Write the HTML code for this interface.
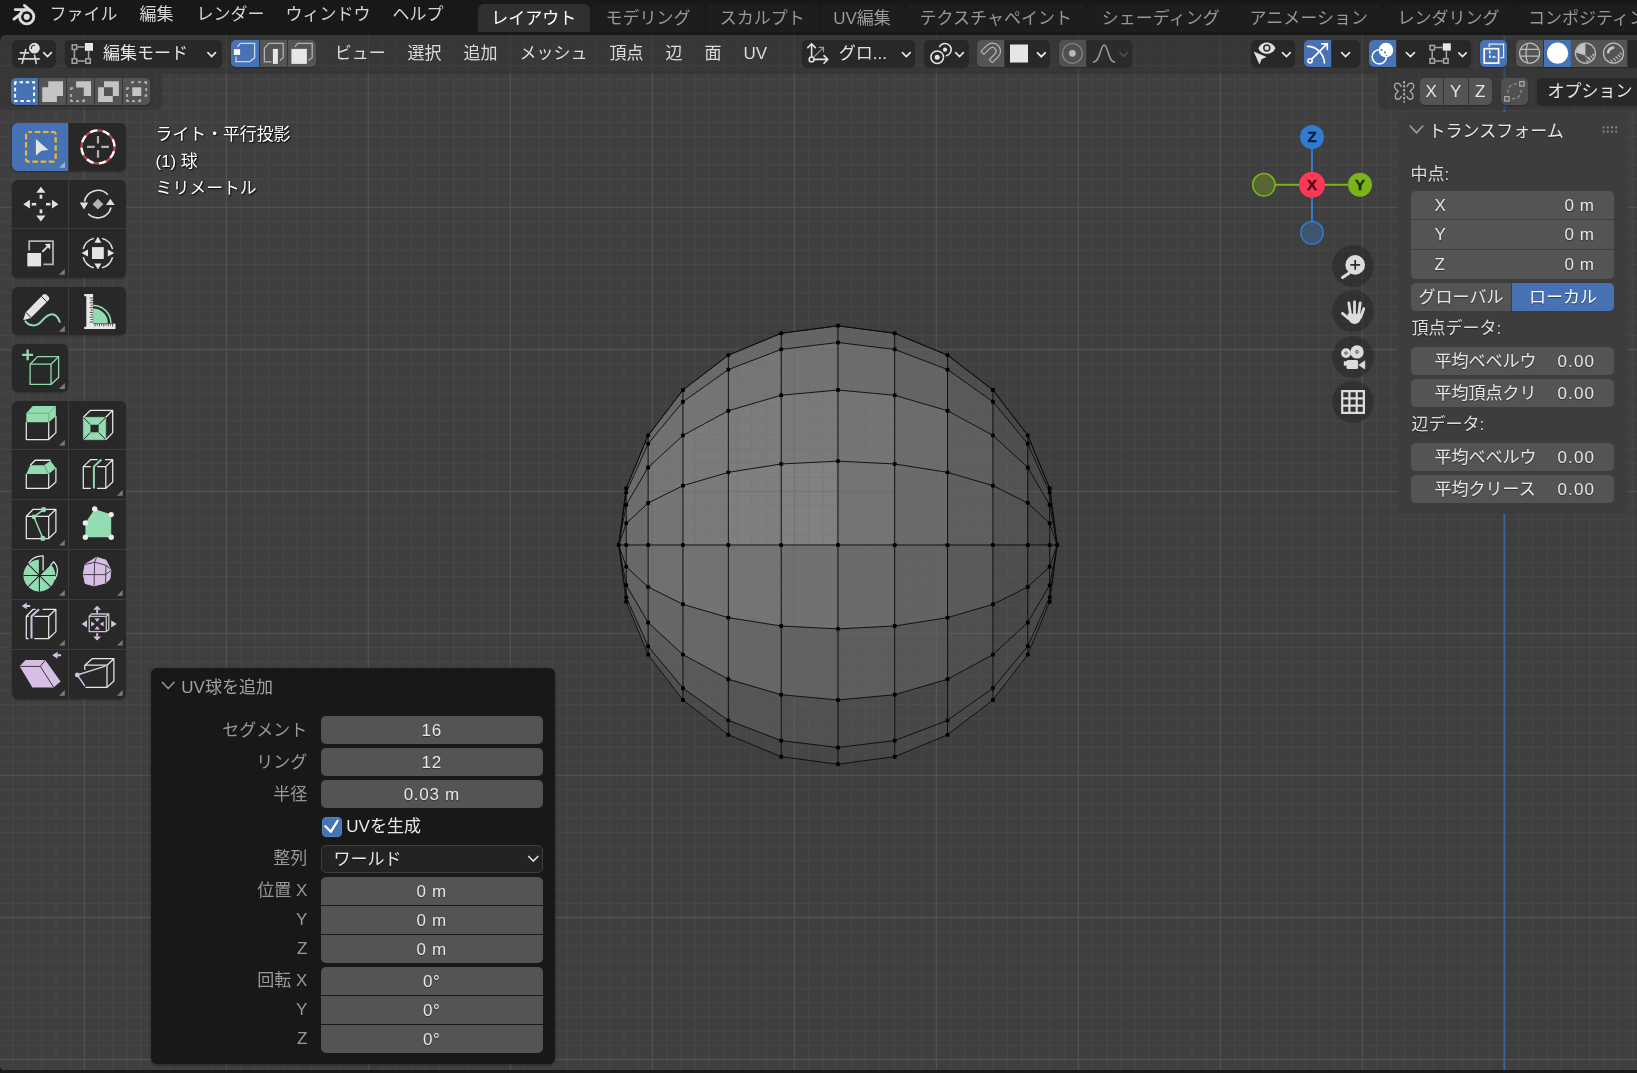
<!DOCTYPE html>
<html lang="ja"><head><meta charset="utf-8"><title>Blender</title>
<style>
*{box-sizing:border-box;margin:0;padding:0}
html,body{width:1637px;height:1073px;overflow:hidden;background:#181818}
body{font-family:"Liberation Sans","Noto Sans CJK JP",sans-serif;font-size:17px;color:#e0e0e0;position:relative;-webkit-font-smoothing:antialiased}
#vp{position:absolute;left:0;top:0;width:1637px;height:1073px;overflow:hidden}
#scene{position:absolute;left:0;top:0;background:#3f3f3f}
.abs{position:absolute}
.t{position:absolute;white-space:nowrap;line-height:24px;height:24px}
#topbar{position:absolute;left:0;top:0;width:1637px;height:34.5px;background:#181818}
#botbar{position:absolute;left:0;top:1069.5px;width:1637px;height:4px;background:#181818}
.menu{color:#d4d4d4}
.tab{position:absolute;top:3.8px;height:28.7px;border-radius:6px 6px 0 0;background:#1d1d1d;color:#989898;text-align:center;line-height:29px;white-space:nowrap;overflow:hidden}
.tab.act{background:#303030;color:#fff}
#hdr{position:absolute;left:0;top:34.5px;width:1637px;height:39px;background:rgba(48,48,48,.5)}
.cornerTL{position:absolute;left:0;top:34.5px;width:6px;height:6px;background:radial-gradient(circle at 6px 6px,rgba(0,0,0,0) 5.5px,#181818 6.2px)}
.cornerBL{position:absolute;left:0;top:1065.5px;width:4px;height:4px;background:radial-gradient(circle at 4px 0,rgba(0,0,0,0) 3.6px,#181818 4.3px)}
#tlh{position:absolute;left:0;top:73.5px;width:162px;height:36px;background:rgba(48,48,48,.5);border-radius:0 0 7px 0}
#trh{position:absolute;left:1378px;top:73.5px;width:259px;height:36px;background:rgba(48,48,48,.5);border-radius:0 0 0 7px}
.btn{position:absolute;top:40px;height:27px;background:#282828;border-radius:5px;box-shadow:0 1px 1px rgba(0,0,0,.25)}
.btn.g{background:#545454}
.btn.b{background:#4772b3}
.btn.l{border-radius:5px 0 0 5px}
.btn.r{border-radius:0 5px 5px 0}
.btn.m{border-radius:0}
.btn svg,.tool svg,.nav svg{position:absolute;left:0;top:0;overflow:visible}
.r2{top:78px}
.hm{position:absolute;top:42px;line-height:24px;color:#dcdcdc;white-space:nowrap}
.tool{position:absolute;background:#282828;width:56px;height:48px}
.tool.sel{background:#4772b3}
.tg{position:absolute;left:12px;width:114px;border-radius:6px;overflow:hidden;background:#3c3c3c;box-shadow:0 1px 2px rgba(0,0,0,.3)}
.ov{position:absolute;left:155.6px;font-size:16.85px;color:#fff;text-shadow:1px 1px 1.5px rgba(0,0,0,.9),0 0 2px rgba(0,0,0,.5);line-height:24px;white-space:nowrap}
.nav{position:absolute;width:42px;height:42px;border-radius:50%;background:rgba(30,30,30,.42);left:1332px}
#npanel{position:absolute;left:1398px;top:110px;width:229px;height:404.5px}
#npbg{position:absolute;left:0;top:2px;width:229px;height:402.3px;background:#3d3d3d;border-radius:6px}
.nf{position:absolute;left:13px;width:203px;background:#545454;color:#e6e6e6;text-shadow:0 1px 1px rgba(0,0,0,.45)}
.nf .l{position:absolute;left:23.5px;top:0;white-space:nowrap}
.nf .v{position:absolute;right:19.4px;top:0;white-space:nowrap;letter-spacing:.6px}
.nf .v.d{right:18.9px;letter-spacing:1.15px}
.nl{position:absolute;left:13.5px;color:#dcdcdc;line-height:24px;white-space:nowrap;text-shadow:0 1px 1px rgba(0,0,0,.45)}
#redo{position:absolute;left:150.5px;top:668px;width:404.5px;height:395.5px;background:#181818;border-radius:6px;box-shadow:0 1px 3px rgba(0,0,0,.4)}
.rf{position:absolute;left:170.5px;width:221.5px;height:28px;background:#545454;color:#e6e6e6;text-align:center;line-height:29px;letter-spacing:.7px;text-shadow:0 1px 1px rgba(0,0,0,.4)}
.rl{position:absolute;right:247.7px;color:#989898;line-height:30px;height:28px;white-space:nowrap;text-align:right}
#ui{position:absolute;left:0;top:0;width:1637px;height:1073px;will-change:transform}
</style></head>
<body>
<div id="vp">
<svg id="scene" width="1637" height="1073" viewBox="0 0 1637 1073">
<g shape-rendering="geometricPrecision"><path d="M618.75 545.00L626.22 488.27L626.22 492.59Z" fill="#5e5f5f" stroke="#5e5f5f" stroke-width="0.6"/><path d="M618.75 545.00L626.22 492.59L626.22 504.88Z" fill="#606161" stroke="#606161" stroke-width="0.6"/><path d="M618.75 545.00L626.22 504.88L626.22 523.29Z" fill="#616262" stroke="#616262" stroke-width="0.6"/><path d="M618.75 545.00L626.22 523.29L626.22 545.00Z" fill="#616161" stroke="#616161" stroke-width="0.6"/><path d="M618.75 545.00L626.22 545.00L626.22 566.71Z" fill="#5f6060" stroke="#5f6060" stroke-width="0.6"/><path d="M618.75 545.00L626.22 566.71L626.22 585.12Z" fill="#5e5e5e" stroke="#5e5e5e" stroke-width="0.6"/><path d="M618.75 545.00L626.22 585.12L626.22 597.41Z" fill="#5b5c5c" stroke="#5b5c5c" stroke-width="0.6"/><path d="M618.75 545.00L626.22 597.41L626.22 601.73Z" fill="#585959" stroke="#585959" stroke-width="0.6"/><path d="M626.22 488.27L648.12 435.40L648.12 443.74L626.22 492.59Z" fill="#646566" stroke="#646566" stroke-width="0.6"/><path d="M626.22 492.59L648.12 443.74L648.12 467.50L626.22 504.88Z" fill="#6a6b6b" stroke="#6a6b6b" stroke-width="0.6"/><path d="M626.22 504.88L648.12 467.50L648.12 503.06L626.22 523.29Z" fill="#6c6d6e" stroke="#6c6d6e" stroke-width="0.6"/><path d="M626.22 523.29L648.12 503.06L648.12 545.00L626.22 545.00Z" fill="#6c6d6d" stroke="#6c6d6d" stroke-width="0.6"/><path d="M626.22 545.00L648.12 545.00L648.12 586.94L626.22 566.71Z" fill="#686a6a" stroke="#686a6a" stroke-width="0.6"/><path d="M626.22 566.71L648.12 586.94L648.12 622.50L626.22 585.12Z" fill="#636464" stroke="#636464" stroke-width="0.6"/><path d="M626.22 585.12L648.12 622.50L648.12 646.26L626.22 597.41Z" fill="#5c5d5d" stroke="#5c5d5d" stroke-width="0.6"/><path d="M626.22 597.41L648.12 646.26L648.12 654.60L626.22 601.73Z" fill="#545555" stroke="#545555" stroke-width="0.6"/><path d="M648.12 435.40L682.95 390.00L682.95 401.80L648.12 443.74Z" fill="#68696a" stroke="#68696a" stroke-width="0.6"/><path d="M648.12 443.74L682.95 401.80L682.95 435.40L648.12 467.50Z" fill="#707272" stroke="#707272" stroke-width="0.6"/><path d="M648.12 467.50L682.95 435.40L682.95 485.68L648.12 503.06Z" fill="#757677" stroke="#757677" stroke-width="0.6"/><path d="M648.12 503.06L682.95 485.68L682.95 545.00L648.12 545.00Z" fill="#747676" stroke="#747676" stroke-width="0.6"/><path d="M648.12 545.00L682.95 545.00L682.95 604.32L648.12 586.94Z" fill="#6f7070" stroke="#6f7070" stroke-width="0.6"/><path d="M648.12 586.94L682.95 604.32L682.95 654.60L648.12 622.50Z" fill="#666767" stroke="#666767" stroke-width="0.6"/><path d="M648.12 622.50L682.95 654.60L682.95 688.20L648.12 646.26Z" fill="#5b5b5b" stroke="#5b5b5b" stroke-width="0.6"/><path d="M648.12 646.26L682.95 688.20L682.95 700.00L648.12 654.60Z" fill="#4f4f4f" stroke="#4f4f4f" stroke-width="0.6"/><path d="M682.95 390.00L728.35 355.17L728.35 369.62L682.95 401.80Z" fill="#696a6b" stroke="#696a6b" stroke-width="0.6"/><path d="M682.95 401.80L728.35 369.62L728.35 410.77L682.95 435.40Z" fill="#747676" stroke="#747676" stroke-width="0.6"/><path d="M682.95 435.40L728.35 410.77L728.35 472.35L682.95 485.68Z" fill="#7a7b7c" stroke="#7a7b7c" stroke-width="0.6"/><path d="M682.95 485.68L728.35 472.35L728.35 545.00L682.95 545.00Z" fill="#797b7b" stroke="#797b7b" stroke-width="0.6"/><path d="M682.95 545.00L728.35 545.00L728.35 617.65L682.95 604.32Z" fill="#727474" stroke="#727474" stroke-width="0.6"/><path d="M682.95 604.32L728.35 617.65L728.35 679.23L682.95 654.60Z" fill="#676868" stroke="#676868" stroke-width="0.6"/><path d="M682.95 654.60L728.35 679.23L728.35 720.38L682.95 688.20Z" fill="#585959" stroke="#585959" stroke-width="0.6"/><path d="M682.95 688.20L728.35 720.38L728.35 734.83L682.95 700.00Z" fill="#4a4a4a" stroke="#4a4a4a" stroke-width="0.6"/><path d="M728.35 355.17L781.22 333.27L781.22 349.39L728.35 369.62Z" fill="#68696a" stroke="#68696a" stroke-width="0.6"/><path d="M728.35 369.62L781.22 349.39L781.22 395.28L728.35 410.77Z" fill="#757677" stroke="#757677" stroke-width="0.6"/><path d="M728.35 410.77L781.22 395.28L781.22 463.97L728.35 472.35Z" fill="#7b7d7d" stroke="#7b7d7d" stroke-width="0.6"/><path d="M728.35 472.35L781.22 463.97L781.22 545.00L728.35 545.00Z" fill="#7e8080" stroke="#7e8080" stroke-width="0.6"/><path d="M728.35 545.00L781.22 545.00L781.22 626.03L728.35 617.65Z" fill="#737475" stroke="#737475" stroke-width="0.6"/><path d="M728.35 617.65L781.22 626.03L781.22 694.72L728.35 679.23Z" fill="#656666" stroke="#656666" stroke-width="0.6"/><path d="M728.35 679.23L781.22 694.72L781.22 740.61L728.35 720.38Z" fill="#555555" stroke="#555555" stroke-width="0.6"/><path d="M728.35 720.38L781.22 740.61L781.22 756.73L728.35 734.83Z" fill="#464645" stroke="#464645" stroke-width="0.6"/><path d="M781.22 333.27L837.95 325.80L837.95 342.49L781.22 349.39Z" fill="#646566" stroke="#646566" stroke-width="0.6"/><path d="M781.22 349.39L837.95 342.49L837.95 390.00L781.22 395.28Z" fill="#727374" stroke="#727374" stroke-width="0.6"/><path d="M781.22 395.28L837.95 390.00L837.95 461.12L781.22 463.97Z" fill="#797b7b" stroke="#797b7b" stroke-width="0.6"/><path d="M781.22 463.97L837.95 461.12L837.95 545.00L781.22 545.00Z" fill="#808182" stroke="#808182" stroke-width="0.6"/><path d="M781.22 545.00L837.95 545.00L837.95 628.88L781.22 626.03Z" fill="#707272" stroke="#707272" stroke-width="0.6"/><path d="M781.22 626.03L837.95 628.88L837.95 700.00L781.22 694.72Z" fill="#616262" stroke="#616262" stroke-width="0.6"/><path d="M781.22 694.72L837.95 700.00L837.95 747.51L781.22 740.61Z" fill="#515151" stroke="#515151" stroke-width="0.6"/><path d="M781.22 740.61L837.95 747.51L837.95 764.20L781.22 756.73Z" fill="#474646" stroke="#474646" stroke-width="0.6"/><path d="M837.95 325.80L894.68 333.27L894.68 349.39L837.95 342.49Z" fill="#5e5f60" stroke="#5e5f60" stroke-width="0.6"/><path d="M837.95 342.49L894.68 349.39L894.68 395.28L837.95 390.00Z" fill="#6c6d6e" stroke="#6c6d6e" stroke-width="0.6"/><path d="M837.95 390.00L894.68 395.28L894.68 463.97L837.95 461.12Z" fill="#737576" stroke="#737576" stroke-width="0.6"/><path d="M837.95 461.12L894.68 463.97L894.68 545.00L837.95 545.00Z" fill="#737475" stroke="#737475" stroke-width="0.6"/><path d="M837.95 545.00L894.68 545.00L894.68 626.03L837.95 628.88Z" fill="#6a6c6c" stroke="#6a6c6c" stroke-width="0.6"/><path d="M837.95 628.88L894.68 626.03L894.68 694.72L837.95 700.00Z" fill="#5d5d5d" stroke="#5d5d5d" stroke-width="0.6"/><path d="M837.95 700.00L894.68 694.72L894.68 740.61L837.95 747.51Z" fill="#4c4c4c" stroke="#4c4c4c" stroke-width="0.6"/><path d="M837.95 747.51L894.68 740.61L894.68 756.73L837.95 764.20Z" fill="#474747" stroke="#474747" stroke-width="0.6"/><path d="M894.68 333.27L947.55 355.17L947.55 369.62L894.68 349.39Z" fill="#575758" stroke="#575758" stroke-width="0.6"/><path d="M894.68 349.39L947.55 369.62L947.55 410.77L894.68 395.28Z" fill="#646466" stroke="#646466" stroke-width="0.6"/><path d="M894.68 395.28L947.55 410.77L947.55 472.35L894.68 463.97Z" fill="#6b6c6d" stroke="#6b6c6d" stroke-width="0.6"/><path d="M894.68 463.97L947.55 472.35L947.55 545.00L894.68 545.00Z" fill="#6a6b6c" stroke="#6a6b6c" stroke-width="0.6"/><path d="M894.68 545.00L947.55 545.00L947.55 617.65L894.68 626.03Z" fill="#626364" stroke="#626364" stroke-width="0.6"/><path d="M894.68 626.03L947.55 617.65L947.55 679.23L894.68 694.72Z" fill="#565757" stroke="#565757" stroke-width="0.6"/><path d="M894.68 694.72L947.55 679.23L947.55 720.38L894.68 740.61Z" fill="#474747" stroke="#474747" stroke-width="0.6"/><path d="M894.68 740.61L947.55 720.38L947.55 734.83L894.68 756.73Z" fill="#484847" stroke="#484847" stroke-width="0.6"/><path d="M947.55 355.17L992.95 390.00L992.95 401.80L947.55 369.62Z" fill="#4e4e4f" stroke="#4e4e4f" stroke-width="0.6"/><path d="M947.55 369.62L992.95 401.80L992.95 435.40L947.55 410.77Z" fill="#59595a" stroke="#59595a" stroke-width="0.6"/><path d="M947.55 410.77L992.95 435.40L992.95 485.68L947.55 472.35Z" fill="#5f5f61" stroke="#5f5f61" stroke-width="0.6"/><path d="M947.55 472.35L992.95 485.68L992.95 545.00L947.55 545.00Z" fill="#5f5f60" stroke="#5f5f60" stroke-width="0.6"/><path d="M947.55 545.00L992.95 545.00L992.95 604.32L947.55 617.65Z" fill="#595a5a" stroke="#595a5a" stroke-width="0.6"/><path d="M947.55 617.65L992.95 604.32L992.95 654.60L947.55 679.23Z" fill="#4f4f4f" stroke="#4f4f4f" stroke-width="0.6"/><path d="M947.55 679.23L992.95 654.60L992.95 688.20L947.55 720.38Z" fill="#484847" stroke="#484847" stroke-width="0.6"/><path d="M947.55 720.38L992.95 688.20L992.95 700.00L947.55 734.83Z" fill="#494848" stroke="#494848" stroke-width="0.6"/><path d="M992.95 390.00L1027.78 435.40L1027.78 443.74L992.95 401.80Z" fill="#474748" stroke="#474748" stroke-width="0.6"/><path d="M992.95 401.80L1027.78 443.74L1027.78 467.50L992.95 435.40Z" fill="#4e4e4f" stroke="#4e4e4f" stroke-width="0.6"/><path d="M992.95 435.40L1027.78 467.50L1027.78 503.06L992.95 485.68Z" fill="#535353" stroke="#535353" stroke-width="0.6"/><path d="M992.95 485.68L1027.78 503.06L1027.78 545.00L992.95 545.00Z" fill="#535353" stroke="#535353" stroke-width="0.6"/><path d="M992.95 545.00L1027.78 545.00L1027.78 586.94L992.95 604.32Z" fill="#4f4e4f" stroke="#4f4e4f" stroke-width="0.6"/><path d="M992.95 604.32L1027.78 586.94L1027.78 622.50L992.95 654.60Z" fill="#484747" stroke="#484747" stroke-width="0.6"/><path d="M992.95 654.60L1027.78 622.50L1027.78 646.26L992.95 688.20Z" fill="#494848" stroke="#494848" stroke-width="0.6"/><path d="M992.95 688.20L1027.78 646.26L1027.78 654.60L992.95 700.00Z" fill="#494948" stroke="#494948" stroke-width="0.6"/><path d="M1027.78 435.40L1049.68 488.27L1049.68 492.59L1027.78 443.74Z" fill="#484848" stroke="#484848" stroke-width="0.6"/><path d="M1027.78 443.74L1049.68 492.59L1049.68 504.88L1027.78 467.50Z" fill="#484848" stroke="#484848" stroke-width="0.6"/><path d="M1027.78 467.50L1049.68 504.88L1049.68 523.29L1027.78 503.06Z" fill="#484748" stroke="#484748" stroke-width="0.6"/><path d="M1027.78 503.06L1049.68 523.29L1049.68 545.00L1027.78 545.00Z" fill="#484748" stroke="#484748" stroke-width="0.6"/><path d="M1027.78 545.00L1049.68 545.00L1049.68 566.71L1027.78 586.94Z" fill="#484848" stroke="#484848" stroke-width="0.6"/><path d="M1027.78 586.94L1049.68 566.71L1049.68 585.12L1027.78 622.50Z" fill="#494848" stroke="#494848" stroke-width="0.6"/><path d="M1027.78 622.50L1049.68 585.12L1049.68 597.41L1027.78 646.26Z" fill="#494848" stroke="#494848" stroke-width="0.6"/><path d="M1027.78 646.26L1049.68 597.41L1049.68 601.73L1027.78 654.60Z" fill="#4a4949" stroke="#4a4949" stroke-width="0.6"/><path d="M1049.68 488.27L1057.15 545.00L1049.68 492.59Z" fill="#494949" stroke="#494949" stroke-width="0.6"/><path d="M1049.68 492.59L1057.15 545.00L1049.68 504.88Z" fill="#494949" stroke="#494949" stroke-width="0.6"/><path d="M1049.68 504.88L1057.15 545.00L1049.68 523.29Z" fill="#494849" stroke="#494849" stroke-width="0.6"/><path d="M1049.68 523.29L1057.15 545.00L1049.68 545.00Z" fill="#494849" stroke="#494849" stroke-width="0.6"/><path d="M1049.68 545.00L1057.15 545.00L1049.68 566.71Z" fill="#494949" stroke="#494949" stroke-width="0.6"/><path d="M1049.68 566.71L1057.15 545.00L1049.68 585.12Z" fill="#494949" stroke="#494949" stroke-width="0.6"/><path d="M1049.68 585.12L1057.15 545.00L1049.68 597.41Z" fill="#4a4949" stroke="#4a4949" stroke-width="0.6"/><path d="M1049.68 597.41L1057.15 545.00L1049.68 601.73Z" fill="#4a4949" stroke="#4a4949" stroke-width="0.6"/></g>
<path d="M13.40 34V1071M27.60 34V1071M41.80 34V1071M56.00 34V1071M70.20 34V1071M98.60 34V1071M112.80 34V1071M127.00 34V1071M141.20 34V1071M155.40 34V1071M169.60 34V1071M183.80 34V1071M198.00 34V1071M212.20 34V1071M240.60 34V1071M254.80 34V1071M269.00 34V1071M283.20 34V1071M297.40 34V1071M311.60 34V1071M325.80 34V1071M340.00 34V1071M354.20 34V1071M382.60 34V1071M396.80 34V1071M411.00 34V1071M425.20 34V1071M439.40 34V1071M453.60 34V1071M467.80 34V1071M482.00 34V1071M496.20 34V1071M524.60 34V1071M538.80 34V1071M553.00 34V1071M567.20 34V1071M581.40 34V1071M595.60 34V1071M609.80 34V1071M624.00 34V1071M638.20 34V1071M666.60 34V1071M680.80 34V1071M695.00 34V1071M709.20 34V1071M723.40 34V1071M737.60 34V1071M751.80 34V1071M766.00 34V1071M780.20 34V1071M808.60 34V1071M822.80 34V1071M837.00 34V1071M851.20 34V1071M865.40 34V1071M879.60 34V1071M893.80 34V1071M908.00 34V1071M922.20 34V1071M950.60 34V1071M964.80 34V1071M979.00 34V1071M993.20 34V1071M1007.40 34V1071M1021.60 34V1071M1035.80 34V1071M1050.00 34V1071M1064.20 34V1071M1092.60 34V1071M1106.80 34V1071M1121.00 34V1071M1135.20 34V1071M1149.40 34V1071M1163.60 34V1071M1177.80 34V1071M1192.00 34V1071M1206.20 34V1071M1234.60 34V1071M1248.80 34V1071M1263.00 34V1071M1277.20 34V1071M1291.40 34V1071M1305.60 34V1071M1319.80 34V1071M1334.00 34V1071M1348.20 34V1071M1376.60 34V1071M1390.80 34V1071M1405.00 34V1071M1419.20 34V1071M1433.40 34V1071M1447.60 34V1071M1461.80 34V1071M1476.00 34V1071M1490.20 34V1071M1518.60 34V1071M1532.80 34V1071M1547.00 34V1071M1561.20 34V1071M1575.40 34V1071M1589.60 34V1071M1603.80 34V1071M1618.00 34V1071M1632.20 34V1071M0 37.10H1637M0 51.30H1637M0 79.70H1637M0 93.90H1637M0 108.10H1637M0 122.30H1637M0 136.50H1637M0 150.70H1637M0 164.90H1637M0 179.10H1637M0 193.30H1637M0 221.70H1637M0 235.90H1637M0 250.10H1637M0 264.30H1637M0 278.50H1637M0 292.70H1637M0 306.90H1637M0 321.10H1637M0 335.30H1637M0 363.70H1637M0 377.90H1637M0 392.10H1637M0 406.30H1637M0 420.50H1637M0 434.70H1637M0 448.90H1637M0 463.10H1637M0 477.30H1637M0 505.70H1637M0 519.90H1637M0 534.10H1637M0 548.30H1637M0 562.50H1637M0 576.70H1637M0 590.90H1637M0 605.10H1637M0 619.30H1637M0 647.70H1637M0 661.90H1637M0 676.10H1637M0 690.30H1637M0 704.50H1637M0 718.70H1637M0 732.90H1637M0 747.10H1637M0 761.30H1637M0 789.70H1637M0 803.90H1637M0 818.10H1637M0 832.30H1637M0 846.50H1637M0 860.70H1637M0 874.90H1637M0 889.10H1637M0 903.30H1637M0 931.70H1637M0 945.90H1637M0 960.10H1637M0 974.30H1637M0 988.50H1637M0 1002.70H1637M0 1016.90H1637M0 1031.10H1637M0 1045.30H1637" stroke="#686868" stroke-opacity="0.18" stroke-width="1.25" fill="none"/>
<path d="M84.40 34V1071M226.40 34V1071M368.40 34V1071M510.40 34V1071M652.40 34V1071M794.40 34V1071M936.40 34V1071M1078.40 34V1071M1220.40 34V1071M1362.40 34V1071M1504.40 34V1071M0 65.50H1637M0 207.50H1637M0 349.50H1637M0 491.50H1637M0 633.50H1637M0 775.50H1637M0 917.50H1637M0 1059.50H1637" stroke="#686868" stroke-opacity="0.43" stroke-width="1.45" fill="none"/>
<path d="M1504.4 34V1071" stroke="#3a659b" stroke-width="1.8" fill="none"/>
<path d="M618.75 545.00L626.22 488.27L648.12 435.40L682.95 390.00L728.35 355.17L781.22 333.27L837.95 325.80L894.68 333.27L947.55 355.17L992.95 390.00L1027.78 435.40L1049.68 488.27L1057.15 545.00M618.75 545.00L626.22 492.59L648.12 443.74L682.95 401.80L728.35 369.62L781.22 349.39L837.95 342.49L894.68 349.39L947.55 369.62L992.95 401.80L1027.78 443.74L1049.68 492.59L1057.15 545.00M618.75 545.00L626.22 504.88L648.12 467.50L682.95 435.40L728.35 410.77L781.22 395.28L837.95 390.00L894.68 395.28L947.55 410.77L992.95 435.40L1027.78 467.50L1049.68 504.88L1057.15 545.00M618.75 545.00L626.22 523.29L648.12 503.06L682.95 485.68L728.35 472.35L781.22 463.97L837.95 461.12L894.68 463.97L947.55 472.35L992.95 485.68L1027.78 503.06L1049.68 523.29L1057.15 545.00M618.75 545.00L626.22 545.00L648.12 545.00L682.95 545.00L728.35 545.00L781.22 545.00L837.95 545.00L894.68 545.00L947.55 545.00L992.95 545.00L1027.78 545.00L1049.68 545.00L1057.15 545.00M618.75 545.00L626.22 566.71L648.12 586.94L682.95 604.32L728.35 617.65L781.22 626.03L837.95 628.88L894.68 626.03L947.55 617.65L992.95 604.32L1027.78 586.94L1049.68 566.71L1057.15 545.00M618.75 545.00L626.22 585.12L648.12 622.50L682.95 654.60L728.35 679.23L781.22 694.72L837.95 700.00L894.68 694.72L947.55 679.23L992.95 654.60L1027.78 622.50L1049.68 585.12L1057.15 545.00M618.75 545.00L626.22 597.41L648.12 646.26L682.95 688.20L728.35 720.38L781.22 740.61L837.95 747.51L894.68 740.61L947.55 720.38L992.95 688.20L1027.78 646.26L1049.68 597.41L1057.15 545.00M618.75 545.00L626.22 601.73L648.12 654.60L682.95 700.00L728.35 734.83L781.22 756.73L837.95 764.20L894.68 756.73L947.55 734.83L992.95 700.00L1027.78 654.60L1049.68 601.73L1057.15 545.00M618.75 545.00L626.22 488.27L648.12 435.40L682.95 390.00L728.35 355.17L781.22 333.27L837.95 325.80L894.68 333.27L947.55 355.17L992.95 390.00L1027.78 435.40L1049.68 488.27L1057.15 545.00M626.22 488.27V601.73M648.12 435.40V654.60M682.95 390.00V700.00M728.35 355.17V734.83M781.22 333.27V756.73M837.95 325.80V764.20M894.68 333.27V756.73M947.55 355.17V734.83M992.95 390.00V700.00M1027.78 435.40V654.60M1049.68 488.27V601.73" stroke="#0c0c0c" stroke-width="0.92" fill="none" stroke-linejoin="round"/>
<g fill="#000"><rect x="616.80" y="543.05" width="3.9" height="3.9" rx="1.3"/><rect x="624.27" y="486.32" width="3.9" height="3.9" rx="1.3"/><rect x="624.27" y="490.64" width="3.9" height="3.9" rx="1.3"/><rect x="624.27" y="502.93" width="3.9" height="3.9" rx="1.3"/><rect x="624.27" y="521.34" width="3.9" height="3.9" rx="1.3"/><rect x="624.27" y="543.05" width="3.9" height="3.9" rx="1.3"/><rect x="624.27" y="564.76" width="3.9" height="3.9" rx="1.3"/><rect x="624.27" y="583.17" width="3.9" height="3.9" rx="1.3"/><rect x="624.27" y="595.46" width="3.9" height="3.9" rx="1.3"/><rect x="624.27" y="599.78" width="3.9" height="3.9" rx="1.3"/><rect x="646.17" y="433.45" width="3.9" height="3.9" rx="1.3"/><rect x="646.17" y="441.79" width="3.9" height="3.9" rx="1.3"/><rect x="646.17" y="465.55" width="3.9" height="3.9" rx="1.3"/><rect x="646.17" y="501.11" width="3.9" height="3.9" rx="1.3"/><rect x="646.17" y="543.05" width="3.9" height="3.9" rx="1.3"/><rect x="646.17" y="584.99" width="3.9" height="3.9" rx="1.3"/><rect x="646.17" y="620.55" width="3.9" height="3.9" rx="1.3"/><rect x="646.17" y="644.31" width="3.9" height="3.9" rx="1.3"/><rect x="646.17" y="652.65" width="3.9" height="3.9" rx="1.3"/><rect x="681.00" y="388.05" width="3.9" height="3.9" rx="1.3"/><rect x="681.00" y="399.85" width="3.9" height="3.9" rx="1.3"/><rect x="681.00" y="433.45" width="3.9" height="3.9" rx="1.3"/><rect x="681.00" y="483.73" width="3.9" height="3.9" rx="1.3"/><rect x="681.00" y="543.05" width="3.9" height="3.9" rx="1.3"/><rect x="681.00" y="602.37" width="3.9" height="3.9" rx="1.3"/><rect x="681.00" y="652.65" width="3.9" height="3.9" rx="1.3"/><rect x="681.00" y="686.25" width="3.9" height="3.9" rx="1.3"/><rect x="681.00" y="698.05" width="3.9" height="3.9" rx="1.3"/><rect x="726.40" y="353.22" width="3.9" height="3.9" rx="1.3"/><rect x="726.40" y="367.67" width="3.9" height="3.9" rx="1.3"/><rect x="726.40" y="408.82" width="3.9" height="3.9" rx="1.3"/><rect x="726.40" y="470.40" width="3.9" height="3.9" rx="1.3"/><rect x="726.40" y="543.05" width="3.9" height="3.9" rx="1.3"/><rect x="726.40" y="615.70" width="3.9" height="3.9" rx="1.3"/><rect x="726.40" y="677.28" width="3.9" height="3.9" rx="1.3"/><rect x="726.40" y="718.43" width="3.9" height="3.9" rx="1.3"/><rect x="726.40" y="732.88" width="3.9" height="3.9" rx="1.3"/><rect x="779.27" y="331.32" width="3.9" height="3.9" rx="1.3"/><rect x="779.27" y="347.44" width="3.9" height="3.9" rx="1.3"/><rect x="779.27" y="393.33" width="3.9" height="3.9" rx="1.3"/><rect x="779.27" y="462.02" width="3.9" height="3.9" rx="1.3"/><rect x="779.27" y="543.05" width="3.9" height="3.9" rx="1.3"/><rect x="779.27" y="624.08" width="3.9" height="3.9" rx="1.3"/><rect x="779.27" y="692.77" width="3.9" height="3.9" rx="1.3"/><rect x="779.27" y="738.66" width="3.9" height="3.9" rx="1.3"/><rect x="779.27" y="754.78" width="3.9" height="3.9" rx="1.3"/><rect x="836.00" y="323.85" width="3.9" height="3.9" rx="1.3"/><rect x="836.00" y="340.54" width="3.9" height="3.9" rx="1.3"/><rect x="836.00" y="388.05" width="3.9" height="3.9" rx="1.3"/><rect x="836.00" y="459.17" width="3.9" height="3.9" rx="1.3"/><rect x="836.00" y="543.05" width="3.9" height="3.9" rx="1.3"/><rect x="836.00" y="626.93" width="3.9" height="3.9" rx="1.3"/><rect x="836.00" y="698.05" width="3.9" height="3.9" rx="1.3"/><rect x="836.00" y="745.56" width="3.9" height="3.9" rx="1.3"/><rect x="836.00" y="762.25" width="3.9" height="3.9" rx="1.3"/><rect x="892.73" y="331.32" width="3.9" height="3.9" rx="1.3"/><rect x="892.73" y="347.44" width="3.9" height="3.9" rx="1.3"/><rect x="892.73" y="393.33" width="3.9" height="3.9" rx="1.3"/><rect x="892.73" y="462.02" width="3.9" height="3.9" rx="1.3"/><rect x="892.73" y="543.05" width="3.9" height="3.9" rx="1.3"/><rect x="892.73" y="624.08" width="3.9" height="3.9" rx="1.3"/><rect x="892.73" y="692.77" width="3.9" height="3.9" rx="1.3"/><rect x="892.73" y="738.66" width="3.9" height="3.9" rx="1.3"/><rect x="892.73" y="754.78" width="3.9" height="3.9" rx="1.3"/><rect x="945.60" y="353.22" width="3.9" height="3.9" rx="1.3"/><rect x="945.60" y="367.67" width="3.9" height="3.9" rx="1.3"/><rect x="945.60" y="408.82" width="3.9" height="3.9" rx="1.3"/><rect x="945.60" y="470.40" width="3.9" height="3.9" rx="1.3"/><rect x="945.60" y="543.05" width="3.9" height="3.9" rx="1.3"/><rect x="945.60" y="615.70" width="3.9" height="3.9" rx="1.3"/><rect x="945.60" y="677.28" width="3.9" height="3.9" rx="1.3"/><rect x="945.60" y="718.43" width="3.9" height="3.9" rx="1.3"/><rect x="945.60" y="732.88" width="3.9" height="3.9" rx="1.3"/><rect x="991.00" y="388.05" width="3.9" height="3.9" rx="1.3"/><rect x="991.00" y="399.85" width="3.9" height="3.9" rx="1.3"/><rect x="991.00" y="433.45" width="3.9" height="3.9" rx="1.3"/><rect x="991.00" y="483.73" width="3.9" height="3.9" rx="1.3"/><rect x="991.00" y="543.05" width="3.9" height="3.9" rx="1.3"/><rect x="991.00" y="602.37" width="3.9" height="3.9" rx="1.3"/><rect x="991.00" y="652.65" width="3.9" height="3.9" rx="1.3"/><rect x="991.00" y="686.25" width="3.9" height="3.9" rx="1.3"/><rect x="991.00" y="698.05" width="3.9" height="3.9" rx="1.3"/><rect x="1025.83" y="433.45" width="3.9" height="3.9" rx="1.3"/><rect x="1025.83" y="441.79" width="3.9" height="3.9" rx="1.3"/><rect x="1025.83" y="465.55" width="3.9" height="3.9" rx="1.3"/><rect x="1025.83" y="501.11" width="3.9" height="3.9" rx="1.3"/><rect x="1025.83" y="543.05" width="3.9" height="3.9" rx="1.3"/><rect x="1025.83" y="584.99" width="3.9" height="3.9" rx="1.3"/><rect x="1025.83" y="620.55" width="3.9" height="3.9" rx="1.3"/><rect x="1025.83" y="644.31" width="3.9" height="3.9" rx="1.3"/><rect x="1025.83" y="652.65" width="3.9" height="3.9" rx="1.3"/><rect x="1047.73" y="486.32" width="3.9" height="3.9" rx="1.3"/><rect x="1047.73" y="490.64" width="3.9" height="3.9" rx="1.3"/><rect x="1047.73" y="502.93" width="3.9" height="3.9" rx="1.3"/><rect x="1047.73" y="521.34" width="3.9" height="3.9" rx="1.3"/><rect x="1047.73" y="543.05" width="3.9" height="3.9" rx="1.3"/><rect x="1047.73" y="564.76" width="3.9" height="3.9" rx="1.3"/><rect x="1047.73" y="583.17" width="3.9" height="3.9" rx="1.3"/><rect x="1047.73" y="595.46" width="3.9" height="3.9" rx="1.3"/><rect x="1047.73" y="599.78" width="3.9" height="3.9" rx="1.3"/><rect x="1055.20" y="543.05" width="3.9" height="3.9" rx="1.3"/></g>
</svg>
<div id="ui">
<div id="hdr"></div><div id="tlh"></div><div id="trh"></div>
<div id="topbar">
<span class="t menu" style="left:49.5px;top:2.5px">ファイル</span>
<span class="t menu" style="left:139.5px;top:2.5px">編集</span>
<span class="t menu" style="left:196.5px;top:2.5px">レンダー</span>
<span class="t menu" style="left:285.5px;top:2.5px">ウィンドウ</span>
<span class="t menu" style="left:392.5px;top:2.5px">ヘルプ</span>
<div class="tab act" style="left:477.5px;width:112.5px">レイアウト</div>
<div class="tab" style="left:591px;width:114px">モデリング</div>
<div class="tab" style="left:705.5px;width:113.5px">スカルプト</div>
<div class="tab" style="left:819.5px;width:85px">UV編集</div>
<div class="tab" style="left:905px;width:181.5px">テクスチャペイント</div>
<div class="tab" style="left:1087px;width:147.5px">シェーディング</div>
<div class="tab" style="left:1235px;width:147.5px">アニメーション</div>
<div class="tab" style="left:1383px;width:131px">レンダリング</div>
<div class="tab" style="left:1514.5px;width:140px;text-align:left;padding-left:13.5px">コンポジティング</div>
</div>
<div class="cornerTL"></div><div class="cornerBL"></div>
<div id="botbar"></div>
<div class="btn" style="left:12px;width:44px"></div>
<div class="btn" style="left:65px;width:157px"><span class="t" style="left:38px;top:2px;color:#e4e4e4">編集モード</span></div>
<div class="btn b l" style="left:231px;width:28px"></div>
<div class="btn g m" style="left:259.5px;width:27.5px"></div>
<div class="btn g r" style="left:287.5px;width:28.5px"></div>
<span class="hm" style="left:334.8px">ビュー</span>
<span class="hm" style="left:407.5px">選択</span>
<span class="hm" style="left:463.5px">追加</span>
<span class="hm" style="left:519.6px">メッシュ</span>
<span class="hm" style="left:609.5px">頂点</span>
<span class="hm" style="left:665.5px">辺</span>
<span class="hm" style="left:704.5px">面</span>
<span class="hm" style="left:743.5px">UV</span>
<div class="btn" style="left:802px;width:113px"><span class="t" style="left:36.7px;top:2px;color:#e4e4e4">グロ...</span></div>
<div class="btn" style="left:924px;width:44.5px"></div>
<div class="btn g l" style="left:977px;width:27px"></div>
<div class="btn r" style="left:1004.5px;width:45.5px"></div>
<div class="btn g l" style="left:1059px;width:27px;background:#505050"></div>
<div class="btn r" style="left:1086.5px;width:45.5px;background:#2b2b2b"></div>
<div class="btn" style="left:1251px;width:44px"></div>
<div class="btn b l" style="left:1304px;width:27px"></div>
<div class="btn r" style="left:1331.5px;width:28.5px"></div>
<div class="btn b l" style="left:1369px;width:27px"></div>
<div class="btn m" style="left:1396.5px;width:29px"></div>
<div class="btn r" style="left:1426px;width:45px"></div>
<div class="btn b" style="left:1480px;width:27px"></div>
<div class="btn g l" style="left:1516.4px;width:26.9px"></div>
<div class="btn b m" style="left:1543.8px;width:27.1px"></div>
<div class="btn g m" style="left:1571.4px;width:27.4px"></div>
<div class="btn g m" style="left:1599.3px;width:28.2px"></div>
<div class="btn m" style="left:1628px;width:20px"></div>
<div class="btn r2 b l" style="left:11px;width:27px"></div>
<div class="btn r2 g m" style="left:38.5px;width:27.7px"></div>
<div class="btn r2 g m" style="left:66.7px;width:27.5px"></div>
<div class="btn r2 g m" style="left:94.7px;width:27.4px"></div>
<div class="btn r2 g r" style="left:122.6px;width:27.4px"></div>
<div class="abs" style="left:1393px;top:78px;width:24px;height:27px"></div>
<div class="btn r2 g l" style="left:1420px;width:23px"><span class="t" style="left:0;width:22.5px;text-align:center;top:1.5px;color:#e6e6e6">X</span></div>
<div class="btn r2 g m" style="left:1443.5px;width:24.5px"><span class="t" style="left:0;width:24.5px;text-align:center;top:1.5px;color:#e6e6e6">Y</span></div>
<div class="btn r2 g r" style="left:1468.5px;width:23.5px"><span class="t" style="left:0;width:23.5px;text-align:center;top:1.5px;color:#e6e6e6">Z</span></div>
<div class="btn r2 g" style="left:1501px;width:27px;background:#505050"></div>
<div class="btn r2 l" style="left:1537px;width:110px"><span class="t" style="left:10.5px;top:1.5px;color:#e6e6e6">オプション</span></div>
<div class="tg" style="top:123px;height:48px"><div class="tool sel" style="left:0;top:0"></div><div class="tool" style="left:57px;top:0;width:57px"></div></div>
<div class="tg" style="top:180.2px;height:97.8px">
<div class="tool" style="left:0;top:0;height:47.8px"></div><div class="tool" style="left:57px;top:0;width:57px;height:47.8px"></div>
<div class="tool" style="left:0;top:48.8px;height:49px"></div><div class="tool" style="left:57px;top:48.8px;width:57px;height:49px"></div></div>
<div class="tg" style="top:287px;height:47.5px"><div class="tool" style="left:0;top:0"></div><div class="tool" style="left:57px;top:0;width:57px"></div></div>
<div class="tg" style="top:344px;height:47.5px;width:56px"><div class="tool" style="left:0;top:0"></div></div>
<div class="tg" style="top:400.8px;height:297.9px">
<div class="tool" style="left:0;top:0;height:48.1px"></div><div class="tool" style="left:57px;top:0;width:57px;height:48.1px"></div>
<div class="tool" style="left:0;top:49.1px;height:49.1px"></div><div class="tool" style="left:57px;top:49.1px;width:57px;height:49.1px"></div>
<div class="tool" style="left:0;top:99.2px;height:48.9px"></div><div class="tool" style="left:57px;top:99.2px;width:57px;height:48.9px"></div>
<div class="tool" style="left:0;top:149.1px;height:48.95px"></div><div class="tool" style="left:57px;top:149.1px;width:57px;height:48.95px"></div>
<div class="tool" style="left:0;top:199.05px;height:49.05px"></div><div class="tool" style="left:57px;top:199.05px;width:57px;height:49.05px"></div>
<div class="tool" style="left:0;top:249.1px;height:48.8px"></div><div class="tool" style="left:57px;top:249.1px;width:57px;height:48.8px"></div>
</div>
<span class="ov" style="top:123px">ライト・平行投影</span>
<span class="ov" style="top:149.8px">(1) 球</span>
<span class="ov" style="top:176.6px">ミリメートル</span>
<div class="nav" style="top:245.3px"></div>
<div class="nav" style="top:290.4px"></div>
<div class="nav" style="top:335.5px"></div>
<div class="nav" style="top:380.8px"></div>
<div id="npanel"><div id="npbg"></div>
<span class="nl" style="left:30.5px;top:9.5px;color:#e6e6e6">トランスフォーム</span>
<span class="nl" style="left:12.5px;top:53.2px">中点:</span>
<div class="nf" style="top:81px;height:28px;border-radius:5px 5px 0 0;line-height:29px"><span class="l">X</span><span class="v">0 m</span></div>
<div class="nf" style="top:110px;height:29px;line-height:30px"><span class="l">Y</span><span class="v">0 m</span></div>
<div class="nf" style="top:140px;height:29px;border-radius:0 0 5px 5px;line-height:30px"><span class="l">Z</span><span class="v">0 m</span></div>
<div class="nf" style="top:173px;height:28px;border-radius:5px 0 0 5px;width:100px;text-align:center;line-height:29px">グローバル</div>
<div class="nf" style="top:173px;height:28px;border-radius:0 5px 5px 0;left:114px;width:102px;background:#4772b3;color:#fff;text-align:center;line-height:29px">ローカル</div>
<span class="nl" style="top:206.5px">頂点データ:</span>
<div class="nf" style="top:237px;height:28px;border-radius:5px;line-height:29px"><span class="l">平均ベベルウ</span><span class="v d">0.00</span></div>
<div class="nf" style="top:269px;height:28px;border-radius:5px;line-height:29px"><span class="l">平均頂点クリ</span><span class="v d">0.00</span></div>
<span class="nl" style="top:303px">辺データ:</span>
<div class="nf" style="top:333px;height:28px;border-radius:5px;line-height:29px"><span class="l">平均ベベルウ</span><span class="v d">0.00</span></div>
<div class="nf" style="top:365px;height:28.3px;border-radius:5px;line-height:29px"><span class="l">平均クリース</span><span class="v d">0.00</span></div>
</div>
<div id="redo">
<span class="t" style="left:30.8px;top:7.5px;color:#a2a2a2">UV球を追加</span>
<span class="rl" style="top:48px">セグメント</span><div class="rf" style="top:48px;border-radius:5px">16</div>
<span class="rl" style="top:80px">リング</span><div class="rf" style="top:80px;border-radius:5px">12</div>
<span class="rl" style="top:112px">半径</span><div class="rf" style="top:112px;border-radius:5px">0.03 m</div>
<div class="abs" style="left:171px;top:148.5px;width:20px;height:20px;border-radius:4px;background:#4772b3;border:1px solid #5a82c0"></div>
<span class="t" style="left:195.8px;top:147px;color:#e8e8e8">UVを生成</span>
<span class="rl" style="top:176px">整列</span>
<div class="rf" style="top:176.5px;border-radius:5px;background:#232323;border:1px solid #3e3e3e;text-align:left;padding-left:11.5px;line-height:27px;letter-spacing:0">ワールド</div>
<span class="rl" style="top:208px">位置 X</span><div class="rf" style="top:208.5px;border-radius:5px 5px 0 0">0 m</div>
<span class="rl" style="top:237px">Y</span><div class="rf" style="top:237.5px">0 m</div>
<span class="rl" style="top:266px">Z</span><div class="rf" style="top:266.5px;border-radius:0 0 5px 5px">0 m</div>
<span class="rl" style="top:298px">回転 X</span><div class="rf" style="top:298.5px;border-radius:5px 5px 0 0">0°</div>
<span class="rl" style="top:327px">Y</span><div class="rf" style="top:327.5px">0°</div>
<span class="rl" style="top:356px">Z</span><div class="rf" style="top:356.5px;border-radius:0 0 5px 5px">0°</div>
</div>
</div>
<svg id="icons" width="1637" height="1073" viewBox="0 0 1637 1073" style="position:absolute;left:0;top:0;pointer-events:none">
<g fill="none" stroke="#dcdcdc" stroke-linecap="round">
<circle cx="26.7" cy="16.8" r="7.1" stroke-width="2.9"/>
<path d="M15.2 9.6H25.5" stroke-width="2.7"/>
<path d="M24.3 5.4L31.6 11.2" stroke-width="2.7"/>
<path d="M14 19.2L21 13.6" stroke-width="2.9"/>
</g>
<circle cx="26.7" cy="16.8" r="3.1" fill="#dcdcdc"/>
<g fill="none" stroke="#d4d4d4" stroke-width="1.6" stroke-linecap="round">
<path d="M20.3 52.9H28.6M18.6 58.9H39.2M25.7 49.6L22.2 63.4M34.6 55.4L36.2 63.4"/>
<path d="M43.7 52.7L47.5 56.6L51.3 52.7" stroke="#e4e4e4" stroke-width="1.7"/>
</g>
<circle cx="34.4" cy="48.2" r="5.4" fill="#dedede"/>
<path d="M31.4 48.4A3.2 3.2 0 0 1 34.6 45.2" fill="none" stroke="#2a2a2a" stroke-width="1.1" stroke-linecap="round"/>
<g fill="none" stroke="#a4a4a4" stroke-width="1.5">
<rect x="72.2" y="44.9" width="4.5" height="4.5"/><rect x="72.2" y="58.8" width="4.5" height="4.5"/><rect x="85.8" y="58.8" width="4.5" height="4.5"/>
<path d="M77.4 47.1H84.5M74.4 50.1V58.1M77.4 61H85.1M88.6 51V58.1"/>
</g>
<rect x="84.9" y="43" width="8.1" height="7.8" fill="#e8e8e8"/>
<path d="M207.9 52.7L211.7 56.6L215.5 52.7" fill="none" stroke="#e4e4e4" stroke-width="1.7" stroke-linecap="round"/>
<path d="M237.4 46.9L240.3 43.4H254.6V57.6L249.7 61.7H236.1V56.5" fill="none" stroke="#fff" stroke-opacity=".72" stroke-width="1.3"/>
<rect x="233.9" y="49.2" width="6.2" height="5.7" fill="#fff"/>
<path d="M271.5 61.8H264.4V48.3L268.8 43.3H283.2V57.7L279.7 60.6" fill="none" stroke="#fff" stroke-opacity=".55" stroke-width="1.3"/>
<rect x="272.9" y="48.9" width="5" height="15" fill="#e6e6e6"/>
<path d="M294.9 46.9L297.8 43.3H312.2V57.7L308.4 60.6" fill="none" stroke="#fff" stroke-opacity=".55" stroke-width="1.3"/>
<rect x="291.4" y="48.9" width="15.5" height="15" fill="#e6e6e6"/>
<g fill="none" stroke="#e2e2e2" stroke-width="1.6" stroke-linecap="round" stroke-linejoin="round">
<circle cx="811.6" cy="59.4" r="2.4"/>
<path d="M811.6 56.8V43.9M807.8 47.6L811.6 43.7L815.4 47.6M814.2 59.4H827.6M824 55.6L827.8 59.4L824 63.2"/>
<path d="M813.8 57.2L823.3 47.6M819.2 47.4H823.5V51.8" stroke="#9c9c9c" stroke-width="1.2"/>
<path d="M902.4 52.7L906.3 56.6L910.2 52.7" stroke-width="1.7"/>
</g>
<g fill="none" stroke="#e2e2e2" stroke-width="1.5" stroke-linecap="round">
<circle cx="937.2" cy="57.2" r="6.3"/>
<path d="M939.6 46.6A6.2 6.2 0 1 1 946.3 55.7"/>
<path d="M955.7 52.7L959.5 56.6L963.3 52.7" stroke-width="1.7"/>
</g>
<circle cx="937.2" cy="57.2" r="2.5" fill="#e6e6e6"/><circle cx="945" cy="49.7" r="2.1" fill="#e6e6e6"/>
<path d="M981 51.3L987.1 45.2A8 8 0 0 1 998.4 56.5L992.3 62.6L989.3 59.6L995.4 53.5A3.8 3.8 0 0 0 990.1 48.2L984 54.3Z" fill="none" stroke="#b4b4b4" stroke-width="1.2" stroke-linejoin="round"/>
<rect x="1010" y="44.5" width="18" height="18" fill="#e6e6e6"/>
<path d="M1037.5 52.8L1041.3 56.7L1045.2 52.8" fill="none" stroke="#e8e8e8" stroke-width="1.8" stroke-linecap="round"/>
<circle cx="1072.4" cy="53.4" r="9.9" fill="none" stroke="#8a8a8a" stroke-width="1.2"/><circle cx="1072.4" cy="53.4" r="3.3" fill="#b8b8b8"/>
<path d="M1093.4 62.1C1100 62.1 1100.5 44.9 1104.2 44.9S1108.2 62.1 1114.6 62.1" fill="none" stroke="#9c9c9c" stroke-width="1.5" stroke-linecap="round"/>
<path d="M1120.0 52.7L1123.6 56.4L1127.2 52.7" fill="none" stroke="#505050" stroke-width="1.6" stroke-linecap="round"/>
<path d="M1258.3 48.2C1261.5 40.6 1272 40.6 1275.3 48.2C1272 55.6 1261.5 55.6 1258.3 48.2Z" fill="#e2e2e2"/>
<circle cx="1266.8" cy="48" r="3.7" fill="#282828"/><circle cx="1266.8" cy="48" r="2.3" fill="#d8d8d8"/>
<path d="M1253.6 51.6L1266.6 57L1261.6 59.2L1259.5 64.6Z" fill="#e2e2e2"/>
<path d="M1282.5 52.7L1286.4 56.6L1290.3 52.7" fill="none" stroke="#e4e4e4" stroke-width="1.7" stroke-linecap="round"/>
<g fill="none" stroke="#fff" stroke-width="1.6" stroke-linecap="round">
<path d="M1307.6 46.4A17 17 0 0 1 1324.4 63"/>
<circle cx="1310" cy="60.8" r="2.1"/>
<path d="M1311.7 59.1L1327 43.9M1321.8 43.9H1327.3V49.4"/>
<path d="M1341.7 52.7L1345.6 56.6L1349.5 52.7" stroke="#e4e4e4" stroke-width="1.7"/>
</g>
<circle cx="1386" cy="50.1" r="7.3" fill="#fff"/>
<path d="M1378.9 49.7A7.1 7.1 0 1 0 1386.4 57.4" fill="none" stroke="#fff" stroke-width="1.6" stroke-linecap="round"/>
<path d="M1380.4 49.7A7.1 7.1 0 0 1 1386.5 55.8" fill="none" stroke="#4772b3" stroke-width="1.5" stroke-dasharray="2.2 2"/>
<path d="M1406.4 52.7L1410.4 56.6L1414.4 52.7" fill="none" stroke="#e4e4e4" stroke-width="1.7" stroke-linecap="round"/>
<g fill="none" stroke="#a4a4a4" stroke-width="1.5">
<rect x="1430" y="45.4" width="4.5" height="4.5"/><rect x="1430" y="58.7" width="4.5" height="4.5"/><rect x="1443.6" y="58.7" width="4.5" height="4.5"/>
<path d="M1435.2 47.6H1442.4M1432.2 50.6V58M1435.2 60.9H1442.9M1446.4 50.6V58"/>
</g>
<rect x="1442.8" y="43.3" width="8" height="7.3" fill="#e8e8e8"/>
<path d="M1458.8 52.9L1462.5 56.6L1466.2 52.9" fill="none" stroke="#e4e4e4" stroke-width="1.7" stroke-linecap="round"/>
<g fill="none" stroke="#fff">
<rect x="1484.2" y="48.7" width="14.4" height="14.4" stroke-width="1.7"/>
<path d="M1489.2 47V44.2H1503.6V57.6H1500.4" stroke-width="1.3" stroke-opacity=".85"/>
<path d="M1489.7 50.6V57H1496.8" stroke-width="1.5" stroke-dasharray="3 1.6"/>
</g>
<g fill="none" stroke="#bcbcbc" stroke-width="1.3">
<circle cx="1529.6" cy="53.2" r="10"/>
<path d="M1520.6 49.4H1538.6M1520 56.2H1539.2M1527.6 43.4C1525.8 49 1525.8 57.4 1527.6 63"/>
<circle cx="1585.4" cy="53.2" r="10"/>
<circle cx="1613.5" cy="53.2" r="10"/>
</g>
<circle cx="1557.6" cy="53.2" r="10.6" fill="#fff"/>
<path d="M1585.4 43.4A10 10 0 0 0 1575.8 52.6L1585.4 55.6Z" fill="#c4c4c4"/>
<path d="M1585.4 55.6L1590.2 60.6" stroke="#bcbcbc" stroke-width="1.2"/>
<path d="M1588.2 57.2L1590.6 59.6M1590.3 55.6L1592.6 57.9M1592.2 54L1594 55.8M1586.3 60.2L1588 61.9" stroke="#bcbcbc" stroke-width="1.2"/>
<path d="M1608.2 52.2A5.8 5.8 0 0 1 1613 47.6" fill="none" stroke="#c8c8c8" stroke-width="2.6" stroke-linecap="round"/>
<path d="M1610.6 59.8L1612.6 61.8M1613.4 58.2L1616 60.8M1615.6 56.4L1618.4 59.2M1617.8 54.6L1620.4 57.2M1619.8 52.6L1621.8 54.6" stroke="#bcbcbc" stroke-width="1.2"/>
<rect x="15.1" y="82.3" width="19" height="18.7" fill="none" stroke="#fff" stroke-width="2" stroke-dasharray="3.4 2.8" stroke-dashoffset="1.7"/>
<path d="M48.2 81.3H63V96H56.9V102H42.2V87.3H48.2Z" fill="#c4c4c4"/>
<path d="M76.1 81.3H91V96H83.7V87.6H76.1Z" fill="#c4c4c4"/>
<path d="M71 90V88.2H73.2M71 94V97M71 99.5V101.2H73M76 101.2H79M82 101.2H84V99.2" fill="none" stroke="#b0b0b0" stroke-width="1.8"/>
<path d="M104 81.3H118.9V96H112.8V102H98.1V87.3H104ZM104 87.3V96H112.8V87.3Z" fill="#c4c4c4" fill-rule="evenodd"/>
<rect x="132.3" y="87.3" width="9" height="8.7" fill="#c4c4c4"/>
<path d="M132 83.5V82.2H134M138 82.2H141M144.2 82.2H146.2V84.2M146.2 88V91M146.2 94V95.8H144.5M127 90V88.2H129M127 94V97M127 99.5V101.2H129M132 101.2H135M138 101.2H140.2V99.2" fill="none" stroke="#b0b0b0" stroke-width="1.8"/>
<g fill="none" stroke="#a6a6a6" stroke-width="1.4" stroke-linecap="round">
<path d="M1401.2 86.5C1399 81.5 1393.6 82.5 1394.6 87C1395.3 89.8 1398 90.2 1398 91.2C1398 92.3 1394.8 93 1395.2 96.6C1395.7 100.2 1400 100 1401.2 96.5"/>
<path d="M1407 86.5C1409.2 81.5 1414.6 82.5 1413.6 87C1412.9 89.8 1410.2 90.2 1410.2 91.2C1410.2 92.3 1413.4 93 1413 96.6C1412.5 100.2 1408.2 100 1407 96.5"/>
<path d="M1404.1 81V102.5" stroke="#d0d0d0" stroke-dasharray="2.6 1.4" stroke-linecap="butt"/>
</g>
<g fill="none" stroke="#a8a8a8" stroke-width="1.3">
<rect x="1519.7" y="81.6" width="4.4" height="4.4"/><rect x="1504.7" y="96.6" width="4.4" height="4.4"/>
<path d="M1508 93A7.6 7.6 0 0 1 1517.4 84.2M1521 89.8A7.6 7.6 0 0 1 1511.8 98.5" stroke="#8c8c8c" stroke-dasharray="3.4 2.2"/>
</g>
<rect x="26.1" y="132" width="29.6" height="29.7" rx="2.4" fill="none" stroke="#f5b02e" stroke-width="2.2" stroke-dasharray="5.6 2.6" stroke-dashoffset="2"/>
<path d="M35.9 139L48.3 150L41.5 150.8L35.9 155.6Z" fill="#e4e4e4"/>
<path d="M65 162.1V167.8H59Z" fill="#fff" fill-opacity=".45"/>
<circle cx="98" cy="146.9" r="16.5" fill="none" stroke="#b5494e" stroke-width="2.3"/>
<circle cx="98" cy="146.9" r="16.5" fill="none" stroke="#fff" stroke-width="2.4" stroke-dasharray="7.36 5.6" stroke-dashoffset="-4.4"/>
<path d="M87 146.9H94.8M101.2 146.9H109M98 136.1V143.6M98 150.3V157.8" stroke="#b0b0b0" stroke-width="2.2" fill="none"/>
<g fill="#e0e0e0">
<path d="M36.2 192.8H45.5L40.9 186.7ZM36.2 215.4H45.5L40.9 221.5ZM29.9 199.7V208.6L23.3 204.2ZM52 199.7V208.6L58.5 204.2Z"/>
<rect x="39.6" y="194.8" width="2.7" height="3.9"/><rect x="39.6" y="209.4" width="2.7" height="3.9"/><rect x="31.7" y="202.9" width="4.5" height="2.6"/><rect x="46" y="202.9" width="4.5" height="2.6"/>
</g>
<path d="M97.9 198.8L103.3 204.2L97.9 209.6L92.5 204.2Z" fill="#b4b4b4"/>
<path d="M79.8 202.5H88.2L84 209.6ZM106 205.1H114.7L110.3 198.7Z" fill="#e0e0e0"/>
<path d="M84.5 201.6A13.6 13.6 0 0 1 107.8 194.7M111 207.5A13.6 13.6 0 0 1 88.2 213.8" fill="none" stroke="#e0e0e0" stroke-width="1.6"/>
<rect x="27.3" y="253" width="13.8" height="13.4" fill="#e4e4e4"/>
<path d="M29.2 250.4V241.2H53V264.4H43.4" fill="none" stroke="#b4b4b4" stroke-width="1.8"/>
<path d="M42.3 251.9L47.5 246.7" stroke="#e4e4e4" stroke-width="1.8"/><path d="M44.8 244.1L50.4 243.8L50.1 249.4Z" fill="#e4e4e4"/>
<path d="M64.8 268.9V274.8H58.9Z" fill="#7c7c7c"/>
<rect x="92" y="247.1" width="11.8" height="11.9" fill="#e4e4e4"/>
<path d="M94.4 242.7H101.4L97.9 236.8ZM94.4 263.5H101.4L97.9 269.4ZM88 249.6V256.6L81.6 253.1ZM107.8 249.6V256.6L114.2 253.1Z" fill="#e4e4e4"/>
<path d="M102 238.4A15.3 15.3 0 0 1 112.6 249M112.6 257.2A15.3 15.3 0 0 1 102 267.8M93.8 267.8A15.3 15.3 0 0 1 83.2 257.2M83.2 249A15.3 15.3 0 0 1 93.8 238.4" fill="none" stroke="#e0e0e0" stroke-width="1.5"/>
<path d="M23.2 320.2L25.6 312.6L43.2 294.6Q45 293.4 46.6 294.8L48.8 296.9Q50 298.4 48.8 300L30.8 318Z" fill="#e4e4e4"/>
<path d="M26 312.4L31 317.6M41.4 296.4L46.8 301.8" stroke="#272727" stroke-width="1"/>
<path d="M25.4 321.3C29 326 36.2 327.4 41.4 321.4S54.6 308.8 59.8 321.8" fill="none" stroke="#8fdbae" stroke-width="2" stroke-linecap="round"/>
<path d="M64.9 325.8V331.8H58.9Z" fill="#7c7c7c"/>
<path d="M93.1 308.5A14.7 14.7 0 0 1 107.8 323.2H93.1Z" fill="#93dbb0"/>
<path d="M93.1 305.4A17.8 17.8 0 0 1 110.9 323.2" fill="none" stroke="#93dbb0" stroke-width="1.5"/>
<path d="M84.2 294H93.1V323.7H115.5V329H84.2V326.8H86.3V296.2H84.2Z" fill="#e8e8e8"/>
<path d="M89.6 298H93.1M90.6 300.4H93.1M89.6 302.8H93.1M90.6 305.2H93.1M89.6 307.6H93.1M90.6 310H93.1M89.6 312.4H93.1M90.6 314.8H93.1M89.6 317.2H93.1M90.6 319.6H93.1M89.6 322H93.1M95 323.7V326.4M97.2 323.7V325.6M99.4 323.7V326.4M101.6 323.7V325.6M103.8 323.7V326.4M106 323.7V325.6M108.2 323.7V326.4M110.4 323.7V325.6M112.6 323.7V326.4" stroke="#3a3a3a" stroke-width=".9"/>
<g fill="none" stroke="#8fdbae" stroke-width="1.3" stroke-linejoin="round">
<rect x="30.1" y="364.2" width="20.9" height="20.2"/>
<path d="M30.1 364.2L37.5 356.6H58.6L51 364.2M58.6 356.6V377.4L51 384.4"/>
</g>
<path d="M22.2 353.7H26.5V349.4H28.8V353.7H33.1V356H28.8V360.3H26.5V356H22.2Z" fill="#93dbb0"/>
<path d="M64.9 383V388.9H58.9Z" fill="#7c7c7c"/>
<path d="M26.3 413.3L32.7 406.1H55.9V416.3L48.7 422.2H26.3Z" fill="#93dbb0"/>
<path d="M26.3 413.3H48.7L55.9 406.1M48.7 413.3V422.2" fill="none" stroke="#6db38c" stroke-width="1"/>
<path d="M26.3 422.2V439.5H48.7V422.2M48.7 439.5L55.9 432.6V416.3" fill="none" stroke="#e6e6e6" stroke-width="1.25" stroke-linejoin="round"/>
<path d="M64.8 440V445.6H59.1Z" fill="#7c7c7c"/>
<path d="M83.3 417.3H105.8V439.7H83.3ZM90.2 424.5V432.6H98.9V424.5Z" fill="#93dbb0" fill-rule="evenodd" stroke="#93dbb0" stroke-width=".5" stroke-linejoin="round"/>
<path d="M83.3 417.3L90.2 424.5M105.8 417.3L98.9 424.5M105.8 439.7L98.9 432.6M83.3 439.7L90.2 432.6" stroke="#272727" stroke-width="1"/>
<path d="M83.3 417.3L90.5 410.3H112.7L105.8 417.3M112.7 410.3V432.6L105.8 439.7" fill="none" stroke="#e6e6e6" stroke-width="1.25" stroke-linejoin="round"/>
<path d="M26.3 474.1L30.2 465.2H44.1L50.5 460.7L55.9 468.1L48.7 474.1Z" fill="#93dbb0"/>
<path d="M44.1 465.2L48.7 474.1" stroke="#5fa07c" stroke-width="1"/>
<path d="M30.2 465.2L35.2 460.2H50.5" fill="none" stroke="#e6e6e6" stroke-width="1.4"/>
<path d="M26.3 474.1V488.4H48.7V474.1M48.7 488.4L55.9 482V468.1" fill="none" stroke="#e6e6e6" stroke-width="1.25" stroke-linejoin="round"/>
<path d="M90.8 466.6H83.3V488.4H90.8M97 488.4H105.8V466.6H97M83.3 466.6L90.5 459.7H97.6M105 459.7H112.7L105.8 466.6M112.7 459.7V482L105.8 488.4" fill="none" stroke="#e6e6e6" stroke-width="1.25" stroke-linejoin="round"/>
<path d="M93.9 488.6V466.6L101.4 459.5" fill="none" stroke="#93dbb0" stroke-width="2"/>
<path d="M122.6 490.1V495.8H117Z" fill="#7c7c7c"/>
<path d="M26.3 516.3H48.7V538.5H26.3ZM26.3 516.3L33.2 509.3H55.9L48.7 516.3M55.9 509.3V531.6L48.7 538.5" fill="none" stroke="#e6e6e6" stroke-width="1.25" stroke-linejoin="round"/>
<path d="M43.6 509.6L33.9 516.8L42.8 538.3" fill="none" stroke="#93dbb0" stroke-width="1.5"/>
<circle cx="43.6" cy="509.6" r="2.6" fill="#93dbb0"/><circle cx="33.9" cy="516.8" r="2.4" fill="#93dbb0"/><circle cx="42.8" cy="538.3" r="2.6" fill="#93dbb0"/>
<path d="M64.8 540V545.6H59.1Z" fill="#7c7c7c"/>
<path d="M94.7 508.9L111.2 514.6V537.3H85.4V522.9Z" fill="#93dbb0"/>
<g fill="#ececec"><circle cx="94.7" cy="508.9" r="2.7"/><circle cx="111.2" cy="514.6" r="2.7"/><circle cx="111.2" cy="537.3" r="2.7"/><circle cx="85.4" cy="537.3" r="2.7"/><circle cx="85.4" cy="522.9" r="2.7"/></g>
<path d="M39.4 575.5L50.7 564.2A16 16 0 1 1 39.4 559.5Z" fill="#93dbb0"/>
<path d="M39.4 559.5V591.5M23.4 575.5H55.4M28.1 564.2L50.7 586.8M28.1 586.8L50.7 564.2" stroke="#272727" stroke-width="1.1"/>
<path d="M28.6 562.8A17.6 17.6 0 0 1 43.1 555.9V570.5" fill="none" stroke="#e6e6e6" stroke-width="1.25"/>
<path d="M50.6 565.2L53.6 561.8C58.4 566.4 58.6 573.4 54.8 579.4" fill="none" stroke="#e6e6e6" stroke-width="1.25"/>
<path d="M64.8 590.1V595.8H59.1Z" fill="#7c7c7c"/>
<path d="M96.6 557.3L106 560.2L110.9 570.1L109.9 579L105.5 582.9L94.1 585.9L85.2 583.4L83.3 574.1L85.2 564.2Z" fill="#d6bfe3" stroke="#d6bfe3" stroke-width="1" stroke-linejoin="round"/>
<path d="M83.3 574.6H105.8L110.9 570.6M94.6 562.2L94.1 585.9M106 565.2L105.5 582.9M85.2 564.6L94.6 562.2L106 565.2L110.4 569M96.6 557.3L94.6 562.2" fill="none" stroke="#3a3340" stroke-width=".9"/>
<path d="M122.6 590.1V595.8H117Z" fill="#7c7c7c"/>
<path d="M28.6 616.3H26.3V638.5H28.6M34.4 638.5H48.7V616.3H34.4M26.3 616.3L33.2 609.3H35.6M42.6 609.3H55.9L48.7 616.3M55.9 609.3V631.6L48.7 638.5" fill="none" stroke="#e6e6e6" stroke-width="1.25" stroke-linejoin="round"/>
<path d="M31.5 638.6V616.3L39.1 609.2" fill="none" stroke="#d6bfe3" stroke-width="2"/>
<path d="M21.8 605.9L26.8 602.4V604.9H30.2V606.9H26.8V609.3Z" fill="#d6bfe3"/>
<path d="M64.8 640V645.6H59.1Z" fill="#7c7c7c"/>
<path d="M89.2 616.3H106.3V631.6H89.2ZM89.2 616.3L91.5 614H108.8L106.3 616.3M108.8 614V629.6L106.3 631.6" fill="none" stroke="#c4c4c4" stroke-width="1.3" stroke-linejoin="round"/>
<g fill="#d6bfe3">
<path d="M93.2 609.8H101.1L97.1 605.7ZM93.2 636.6H101.1L97.1 640.6ZM87 620.2V627.6L81.6 623.9ZM111.2 620.2V627.6L116.7 623.9Z"/>
<rect x="96.2" y="609.8" width="1.9" height="3.4"/><rect x="96.2" y="633.2" width="1.9" height="3.4"/>
<path d="M94.6 618.4H99.8L97.2 622ZM94.6 629.6H99.8L97.2 626ZM91.2 621.4V626.6L95 624ZM103.6 621.4V626.6L99.8 624Z"/>
</g>
<path d="M122.6 640V645.6H117Z" fill="#7c7c7c"/>
<path d="M19.6 666.2L25.5 660H45.2L60.6 681.5L53.6 687.4H32.4Z" fill="#d6bfe3"/>
<path d="M19.8 666.4H40.3L53.6 687.2M40.3 666.4L45.2 660.2" fill="none" stroke="#3a3340" stroke-width="1"/>
<path d="M52.2 655.3L57.6 651.8V654.3H61.1V656.3H57.6V658.7Z" fill="#d6bfe3"/>
<path d="M64.8 690.1V695.8H59.1Z" fill="#7c7c7c"/>
<path d="M84.8 670V665.2L92.2 658.7H113.9L107 665.2H84.8M113.9 658.7V681L107 687.4V665.2M107 687.4H85.4" fill="none" stroke="#e6e6e6" stroke-width="1.25" stroke-linejoin="round"/>
<path d="M105.4 666.2L77.3 675L84.8 686" fill="none" stroke="#d6bfe3" stroke-width="1.4"/>
<circle cx="77.3" cy="675" r="2.4" fill="#d6bfe3"/>
<path d="M122.6 690.1V695.8H117Z" fill="#7c7c7c"/>
<g stroke-width="2" fill="none">
<path d="M1312 136.9V232.8" stroke="#2f7cd0"/>
<path d="M1263.9 184.8H1360" stroke="#79b518"/>
</g>
<circle cx="1263.9" cy="184.8" r="11.2" fill="#566630" stroke="#7cb51c" stroke-width="1.5"/>
<circle cx="1312" cy="232.8" r="11.2" fill="#3e5470" stroke="#2f7cd0" stroke-width="1.5"/>
<circle cx="1312" cy="136.9" r="12" fill="#2f7cd0"/>
<circle cx="1360" cy="184.8" r="12" fill="#79b518"/>
<circle cx="1312" cy="184.8" r="13" fill="#fc3856"/>
<g style="font-family:'Liberation Sans','Noto Sans CJK JP',sans-serif;font-weight:bold;font-size:15px" text-anchor="middle">
<text x="1312" y="142.3" fill="#0b1d3c" stroke="#0b1d3c" stroke-width=".5">Z</text>
<text x="1312" y="190.3" fill="#4f0a18" stroke="#4f0a18" stroke-width=".5">X</text>
<text x="1360" y="190.3" fill="#1f3305" stroke="#1f3305" stroke-width=".5">Y</text>
</g>
<path d="M1348.9 273.3L1342.5 277.5" stroke="#dcdcdc" stroke-width="3" stroke-linecap="round"/>
<circle cx="1355.2" cy="264.9" r="9.8" fill="#dcdcdc"/>
<path d="M1350.3 264.9H1360.1M1355.2 260V269.8" stroke="#2e2e2e" stroke-width="1.8"/>
<g stroke="#dcdcdc" stroke-width="2.8" stroke-linecap="round" fill="none">
<path d="M1348.8 302.8L1350.6 315M1354.5 301.8V315M1360.2 302.8L1358.6 315M1363.8 308.6L1360.8 317M1342.4 313.4L1348.8 318.6"/>
</g>
<path d="M1347.6 313.5C1347.8 320.5 1350.5 324 1354.6 324C1358.8 324 1361.5 320 1362.2 314Z" fill="#dcdcdc"/>
<circle cx="1346" cy="353.1" r="4.9" fill="#dcdcdc"/><circle cx="1357" cy="351.9" r="6.7" fill="#dcdcdc"/>
<circle cx="1346" cy="353.1" r="1.3" fill="none" stroke="#333" stroke-width=".8"/><circle cx="1357" cy="351.9" r="1.4" fill="none" stroke="#333" stroke-width=".8"/>
<rect x="1346.5" y="360" width="11.6" height="9" rx="1.6" fill="#dcdcdc"/><rect x="1343.8" y="361.3" width="3.2" height="4.4" fill="#dcdcdc"/>
<path d="M1358.9 364.9L1364.8 360.9V368.9Z" fill="#dcdcdc" stroke="#dcdcdc" stroke-width=".8" stroke-linejoin="round"/>
<path d="M1342.2 391.2H1363.9V412.8H1342.2ZM1349.4 391.2V412.8M1356.7 391.2V412.8M1342.2 398.4H1363.9M1342.2 405.6H1363.9" fill="none" stroke="#dcdcdc" stroke-width="2.2"/>
<path d="M1410.2 126.1L1416.5 132.8L1422.8 126.1" fill="none" stroke="#a2a2a2" stroke-width="1.5" stroke-linecap="round"/>
<g fill="#8a8a8a"><rect x="1602.6" y="126.4" width="1.9" height="1.9"/><rect x="1606.8" y="126.4" width="1.9" height="1.9"/><rect x="1611" y="126.4" width="1.9" height="1.9"/><rect x="1615.2" y="126.4" width="1.9" height="1.9"/><rect x="1602.6" y="130.6" width="1.9" height="1.9"/><rect x="1606.8" y="130.6" width="1.9" height="1.9"/><rect x="1611" y="130.6" width="1.9" height="1.9"/><rect x="1615.2" y="130.6" width="1.9" height="1.9"/></g>
<path d="M162.3 682.3L168.2 688.4L174.1 682.3" fill="none" stroke="#9a9a9a" stroke-width="1.5" stroke-linecap="round"/>
<path d="M528.8 856.5L533.3 861L537.8 856.5" fill="none" stroke="#dcdcdc" stroke-width="1.7" stroke-linecap="round"/>
<path d="M325.4 826.2L330.8 831.8L337.6 820.8" fill="none" stroke="#fff" stroke-width="2.3" stroke-linecap="round" stroke-linejoin="round"/>
</svg>
</div>
</body></html>
